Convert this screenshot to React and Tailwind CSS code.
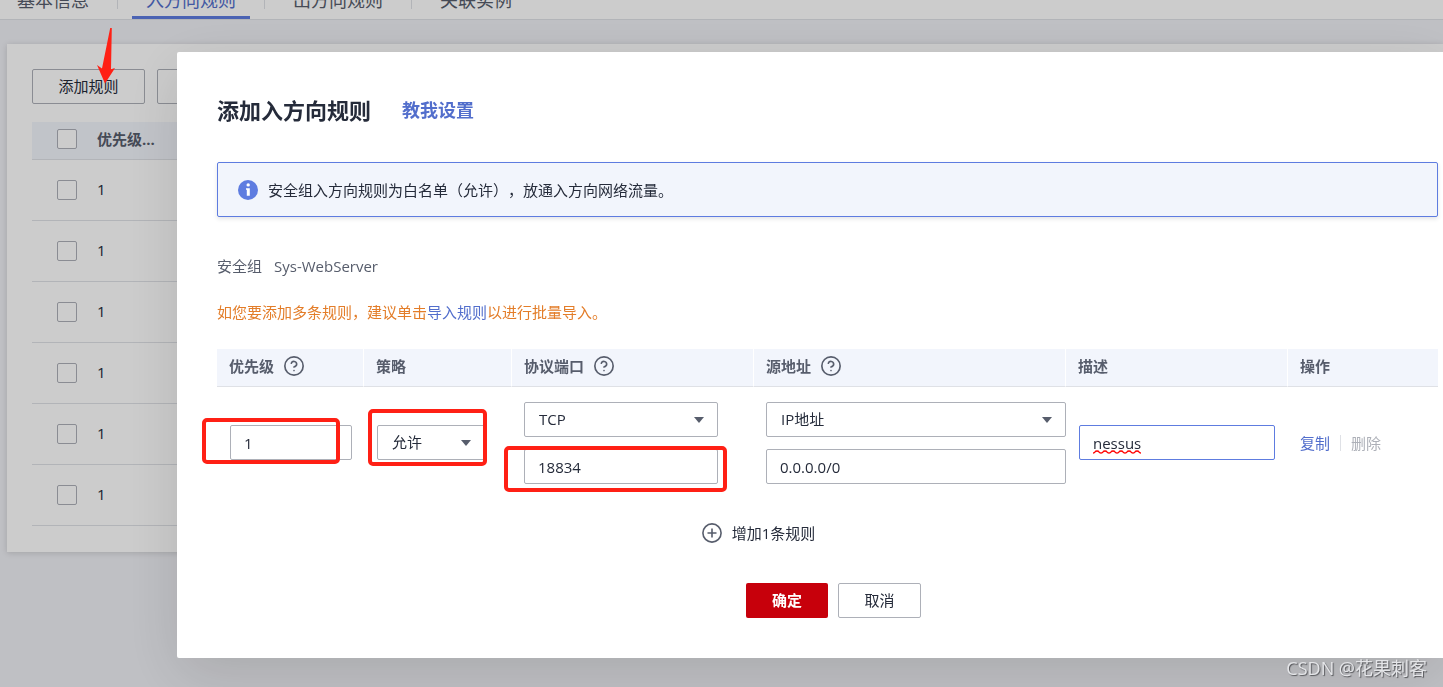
import { useState } from "react"
import { CircleHelp } from "lucide-react"

const TABS = ["基本信息", "入方向规则", "出方向规则", "关联实例"]
const RULES = [1, 2, 3, 4, 5, 6]

const COLUMNS = [
  { label: "优先级", help: true, width: "w-[147px]" },
  { label: "策略", help: false, width: "w-[148px]" },
  { label: "协议端口", help: true, width: "w-[242px]" },
  { label: "源地址", help: true, width: "w-[312px]" },
  { label: "描述", help: false, width: "w-[222px]" },
  { label: "操作", help: false, width: "w-auto" },
]

const FIELD = "block h-[35px] w-full rounded-xs border bg-white text-[15px] text-[#252b3a] outline-none"
const BUTTON = "h-[35px] rounded-xs border border-[#adb0b8] pb-[2px] text-[#252b3a]"
const CHECKBOX = "block h-5 w-5 appearance-none rounded-xs border border-[#adb0b8] bg-white"

function TextField({ label, value, onChange, className = "border-[#adb0b8]" }) {
  return (
    <input
      type="text"
      aria-label={label}
      value={value}
      onChange={(e) => onChange(e.target.value)}
      className={`${FIELD} px-[13px] ${className}`}
    />
  )
}

function SelectField({ label, value, onChange, options }) {
  return (
    <div className="relative">
      <select
        aria-label={label}
        value={value}
        onChange={(e) => onChange(e.target.value)}
        className={`${FIELD} appearance-none border-[#adb0b8] px-[14px] pb-[2px]`}
      >
        {options.map((o) => (
          <option key={o}>{o}</option>
        ))}
      </select>
      <svg viewBox="0 0 10 6" className="pointer-events-none absolute top-[15px] right-[14px] h-[6px] w-[10px]" fill="#575d6c">
        <path d="M0 0h10L5 6z" />
      </svg>
    </div>
  )
}

function Mark({ className }) {
  return <span aria-hidden="true" className={`pointer-events-none absolute rounded-[5px] border-[4px] border-[#ff2015] ${className}`} />
}

// spelling underline below the description text
function Squiggle() {
  return (
    <svg viewBox="0 0 48 4" className="pointer-events-none absolute top-[25px] left-[14px] h-1 w-12" fill="none" stroke="#ff0000" strokeWidth="1.4">
      <path d="M0 3q1.5 0 2-1t2-1 2 1 2 1 2-1 2-1 2 1 2 1 2-1 2-1 2 1 2 1 2-1 2-1 2 1 2 1 2-1 2-1 2 1 2 1 2-1 2-1 2 1 2 1" />
    </svg>
  )
}

function InfoIcon() {
  return (
    <svg viewBox="0 0 20 20" className="h-5 w-5 shrink-0">
      <circle cx="10" cy="10" r="10" fill="#5e7ce0" />
      <circle cx="10.2" cy="4.9" r="1.7" fill="#fff" />
      <path d="M8 8.2h3.8v7.6H8.8V9.8H8z" fill="#fff" />
    </svg>
  )
}

function PlusIcon() {
  return (
    <svg viewBox="0 0 20 20" className="h-5 w-5" fill="none" stroke="#575d6c" strokeWidth="1.6">
      <circle cx="10" cy="10" r="9.1" />
      <path d="M10 5.5v9M5.5 10h9" />
    </svg>
  )
}

function RulesPage() {
  return (
    <div>
      <nav className="flex h-5 items-end gap-[14px] border-b border-[#dfe1e6] bg-white pl-[3px] text-lg leading-6 text-[#575d6c]">
        {TABS.map((tab, i) => (
          <div key={tab} className="flex items-end gap-[14px]">
            {i > 0 && <span className="mb-[10px] h-5 w-px bg-[#dfe1e6]" />}
            <a
              href="#"
              className={`border-b-[3px] px-[14px] pb-1 whitespace-nowrap ${i === 1 ? "border-[#5e7ce0] text-[#526ecc]" : "border-transparent"}`}
            >
              {tab}
            </a>
          </div>
        ))}
      </nav>
      <main className="mt-6 ml-[7px] bg-white pt-[25px] pb-[26px] pl-[25px] shadow-[0_1px_6px_rgba(0,0,0,0.15)]">
        <div className="flex gap-3">
          <button className={`w-[113px] ${BUTTON}`}>添加规则</button>
          <button className={`w-[113px] ${BUTTON}`}>快速添加</button>
        </div>
        <table className="mt-[18px] w-full table-fixed border-collapse text-left">
          <thead>
            <tr className="h-[37px] border-b border-[#dfe1e6] bg-[#f2f5fc] text-[#575d6c]">
              <th className="w-[65px] pb-[2px] pl-[25px]">
                <input type="checkbox" aria-label="全选" className={CHECKBOX} />
              </th>
              <th className="pb-[2px] font-bold">优先级...</th>
            </tr>
          </thead>
          <tbody>
            {RULES.map((id) => (
              <tr key={id} className="h-[61px] border-b border-[#dfe1e6]">
                <td className="pl-[25px]">
                  <input type="checkbox" aria-label={`选择规则 ${id}`} className={CHECKBOX} />
                </td>
                <td className="pb-[2px] text-[#252b3a]">1</td>
              </tr>
            ))}
          </tbody>
        </table>
      </main>
    </div>
  )
}

function AddRuleDialog() {
  const [rule, setRule] = useState({
    priority: "1",
    policy: "允许",
    protocol: "TCP",
    port: "18834",
    sourceType: "IP地址",
    source: "0.0.0.0/0",
    description: "nessus",
  })
  const set = (key) => (value) => setRule((r) => ({ ...r, [key]: value }))

  return (
    <div
      role="dialog"
      aria-labelledby="dialog-title"
      className="mt-[52px] ml-[177px] rounded-l-xs bg-white pt-[43px] pr-[5px] pb-10 pl-10 shadow-[0_16px_60px_rgba(0,0,0,0.12)]"
    >
      <header className="flex h-[30px] items-center gap-[31px]">
        <h1 id="dialog-title" className="text-[22px] font-bold text-[#252b3a]">添加入方向规则</h1>
        <a href="#" className="text-lg font-bold text-[#526ecc]">教我设置</a>
      </header>

      <div className="mt-[37px] flex h-[55px] items-center gap-[10px] rounded-xs border border-[#5e7ce0] bg-[#f2f5fc] px-5 text-[#252b3a] shadow-[0_2px_4px_rgba(37,43,58,0.12)]">
        <InfoIcon />
        <p className="[text-spacing-trim:space-all]">安全组入方向规则为白名单（允许），放通入方向网络流量。</p>
      </div>

      <p className="mt-[38px] flex gap-3 text-[#575d6c]">
        <span>安全组</span>
        <span>Sys-WebServer</span>
      </p>
      <p className="mt-6 text-[#e37d29]">
        如您要添加多条规则，建议单击<a href="#" className="text-[#526ecc]">导入规则</a>以进行批量导入。
      </p>

      <table className="mt-[26px] w-full table-fixed border-separate border-spacing-0 text-left">
        <thead>
          <tr className="h-[38px] bg-[#f2f5fc] text-[#575d6c]">
            {COLUMNS.map((c) => (
              <th key={c.label} className={`border-r border-b border-r-white border-b-[#dfe1e6] pt-0 pb-1 pl-3 font-bold last:border-r-0 ${c.width}`}>
                <span className="flex items-center gap-[9px]">
                  {c.label}
                  {c.help && <CircleHelp size={22} strokeWidth={1.8} />}
                </span>
              </th>
            ))}
          </tr>
        </thead>
        <tbody>
          <tr>
            <td className="pt-[14px] pl-[13px]">
              <div className="relative w-[122px]">
                <TextField label="优先级" value={rule.priority} onChange={set("priority")} />
                <Mark className="-top-[7px] -left-[28px] h-[46px] w-[138px]" />
              </div>
            </td>
            <td className="pt-[14px] pl-[13px]">
              <div className="relative w-[108px]">
                <SelectField label="策略" value={rule.policy} onChange={set("policy")} options={["允许", "拒绝"]} />
                <Mark className="-top-[16px] -left-[9px] h-[57px] w-[119px]" />
              </div>
            </td>
            <td className="pt-[15px] pl-3">
              <div className="flex w-[194px] flex-col gap-3">
                <SelectField label="协议" value={rule.protocol} onChange={set("protocol")} options={["TCP", "UDP", "ICMP"]} />
                <div className="relative">
                  <TextField label="端口" value={rule.port} onChange={set("port")} />
                  <Mark className="-top-[3px] -left-[20px] h-[46px] w-[223px]" />
                </div>
              </div>
            </td>
            <td className="pt-[15px] pl-3">
              <div className="flex flex-col gap-3">
                <SelectField label="源地址类型" value={rule.sourceType} onChange={set("sourceType")} options={["IP地址", "安全组"]} />
                <TextField label="源地址" value={rule.source} onChange={set("source")} />
              </div>
            </td>
            <td className="pt-[14px] pl-[13px]">
              <div className="relative w-[196px]">
                <TextField label="描述" value={rule.description} onChange={set("description")} className="border-[#5e7ce0]" />
                {rule.description === "nessus" && <Squiggle />}
              </div>
            </td>
            <td className="pt-[14px] pl-3">
              <div className="flex items-center gap-[10px]">
                <button className="text-[#526ecc]">复制</button>
                <span className="h-4 w-px bg-[#dfe1e6]" />
                <button disabled className="text-[#adb0b8]">删除</button>
              </div>
            </td>
          </tr>
        </tbody>
      </table>

      <div className="mt-[38px] flex justify-center pr-[138px]">
        <button className="flex items-center gap-[10px] text-[#252b3a]">
          <PlusIcon />
          增加1条规则
        </button>
      </div>

      <footer className="mt-[39px] flex justify-center gap-[10px] pl-3">
        <button className="h-[35px] w-[82px] rounded-xs bg-[#c7000b] pb-[2px] font-bold text-white">确定</button>
        <button className={`w-[83px] ${BUTTON}`}>取消</button>
      </footer>
    </div>
  )
}

export default function App() {
  return (
    <div className="min-h-screen overflow-hidden bg-[#eff0f5] font-['Open_Sans','Noto_Sans_CJK_SC',sans-serif] text-[15px] leading-[22px]">
      <RulesPage />
      <div className="fixed inset-0 overflow-hidden bg-black/20">
        <AddRuleDialog />
      </div>
      <svg viewBox="0 0 18 56" className="pointer-events-none absolute top-7 left-[97px] h-14 w-[18px]" fill="#ff2015">
        <path d="M13.2 0h1.6L14 41.3l4-1.3L8 55.5 0 37l5 3.5z" />
      </svg>
      <p className="fixed right-4 bottom-[7px] text-lg leading-6 text-[#e4e5e8] [text-shadow:1px_1px_1px_#55565a]">CSDN @花果刺客</p>
    </div>
  )
}
